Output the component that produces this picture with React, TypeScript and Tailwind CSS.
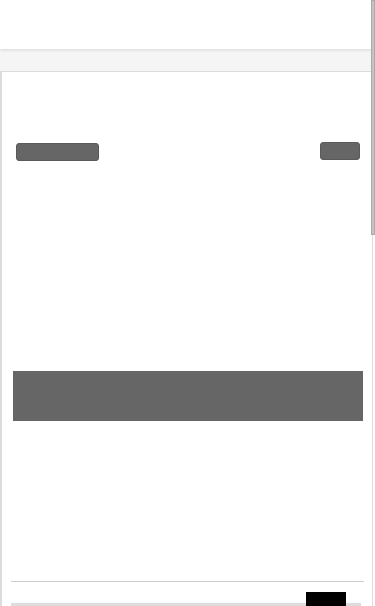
const App = () => {
  return (
    <div className="relative h-[606px] overflow-hidden bg-white font-['Liberation_Sans',sans-serif]">
      {/* header */}
      <div className="relative z-10 h-[49px] bg-white shadow-[0_1px_3px_rgba(0,0,0,0.12)]"></div>
      <div className="h-[22px] bg-[#f5f5f5]"></div>

      {/* card */}
      <div className="mr-[2px] h-[600px] border-t border-r border-l-2 border-[#dcdcdc] bg-white">
        {/* toolbar row */}
        <div className="flex items-start justify-between pt-[70px] pl-[14px] pr-[12px]">
          <button className="mt-[1px] h-[18px] w-[83px] rounded-[3px] border border-[#5a5a5a] bg-[#666]"></button>
          <button className="h-[18px] w-[40px] rounded-[3px] border border-[#5a5a5a] bg-[#666]"></button>
        </div>

        {/* banner */}
        <div className="mt-[210px] ml-[11px] mr-[9px] h-[50px] bg-[#666]"></div>

        {/* footer */}
        <div className="mt-[160px] ml-[9px] mr-[8px] border-t-[1px] border-[#ccc]"></div>
        <div className="relative ml-[9px] mr-[11px] mt-[21px] h-[3px] bg-[#ddd]">
          <div className="absolute right-[15px] top-[-11px] h-[16px] w-[40px] bg-black"></div>
        </div>
      </div>

      {/* scrollbar thumb */}
      <div className="absolute right-0 top-0 z-20 h-[235px] w-[4px] border border-[#aaa] bg-[#c4c4c4]"></div>
    </div>
  );
};

export default App;
